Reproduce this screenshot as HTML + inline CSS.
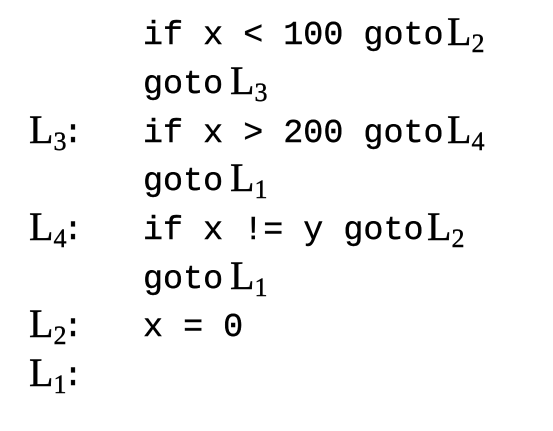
<!DOCTYPE html>
<html><head><style>
html,body{margin:0;padding:0;background:#fff;}
body{width:553px;height:431px;position:relative;overflow:hidden;color:#000;}
.ln{position:absolute;left:0;height:49px;white-space:pre;}
.c{position:absolute;font-family:"Liberation Mono",monospace;font-size:33.4px;line-height:1;-webkit-text-stroke:0.4px #000;}
.L{position:absolute;font-family:"Liberation Serif",serif;font-size:40px;line-height:1;-webkit-text-stroke:0.4px #000;}
.L sub{font-size:26px;vertical-align:0;position:relative;top:7px;margin-left:0px;}
</style></head><body>
<div class="ln" style="top:0"><span class="c" style="left:143px;top:20px">if x &lt; 100 goto</span><span class="L" style="left:447px;top:12px">L<sub>2</sub></span></div>
<div class="ln" style="top:49px"><span class="c" style="left:143px;top:20px">goto</span><span class="L" style="left:230px;top:12px">L<sub>3</sub></span></div>
<div class="ln" style="top:98px"><span class="L" style="left:29px;top:12px">L<sub>3</sub></span><span class="c" style="left:63px;top:20px">:</span><span class="c" style="left:143px;top:20px">if x &gt; 200 goto</span><span class="L" style="left:447px;top:12px">L<sub>4</sub></span></div>
<div class="ln" style="top:146px"><span class="c" style="left:143px;top:20px">goto</span><span class="L" style="left:230px;top:12px">L<sub>1</sub></span></div>
<div class="ln" style="top:195px"><span class="L" style="left:29px;top:12px">L<sub>4</sub></span><span class="c" style="left:63px;top:20px">:</span><span class="c" style="left:143px;top:20px">if x != y goto</span><span class="L" style="left:427px;top:12px">L<sub>2</sub></span></div>
<div class="ln" style="top:244px"><span class="c" style="left:143px;top:20px">goto</span><span class="L" style="left:230px;top:12px">L<sub>1</sub></span></div>
<div class="ln" style="top:292px"><span class="L" style="left:29px;top:12px">L<sub>2</sub></span><span class="c" style="left:63px;top:20px">:</span><span class="c" style="left:143px;top:20px">x = 0</span></div>
<div class="ln" style="top:341px"><span class="L" style="left:29px;top:12px">L<sub>1</sub></span><span class="c" style="left:63px;top:20px">:</span></div>
</body></html>
